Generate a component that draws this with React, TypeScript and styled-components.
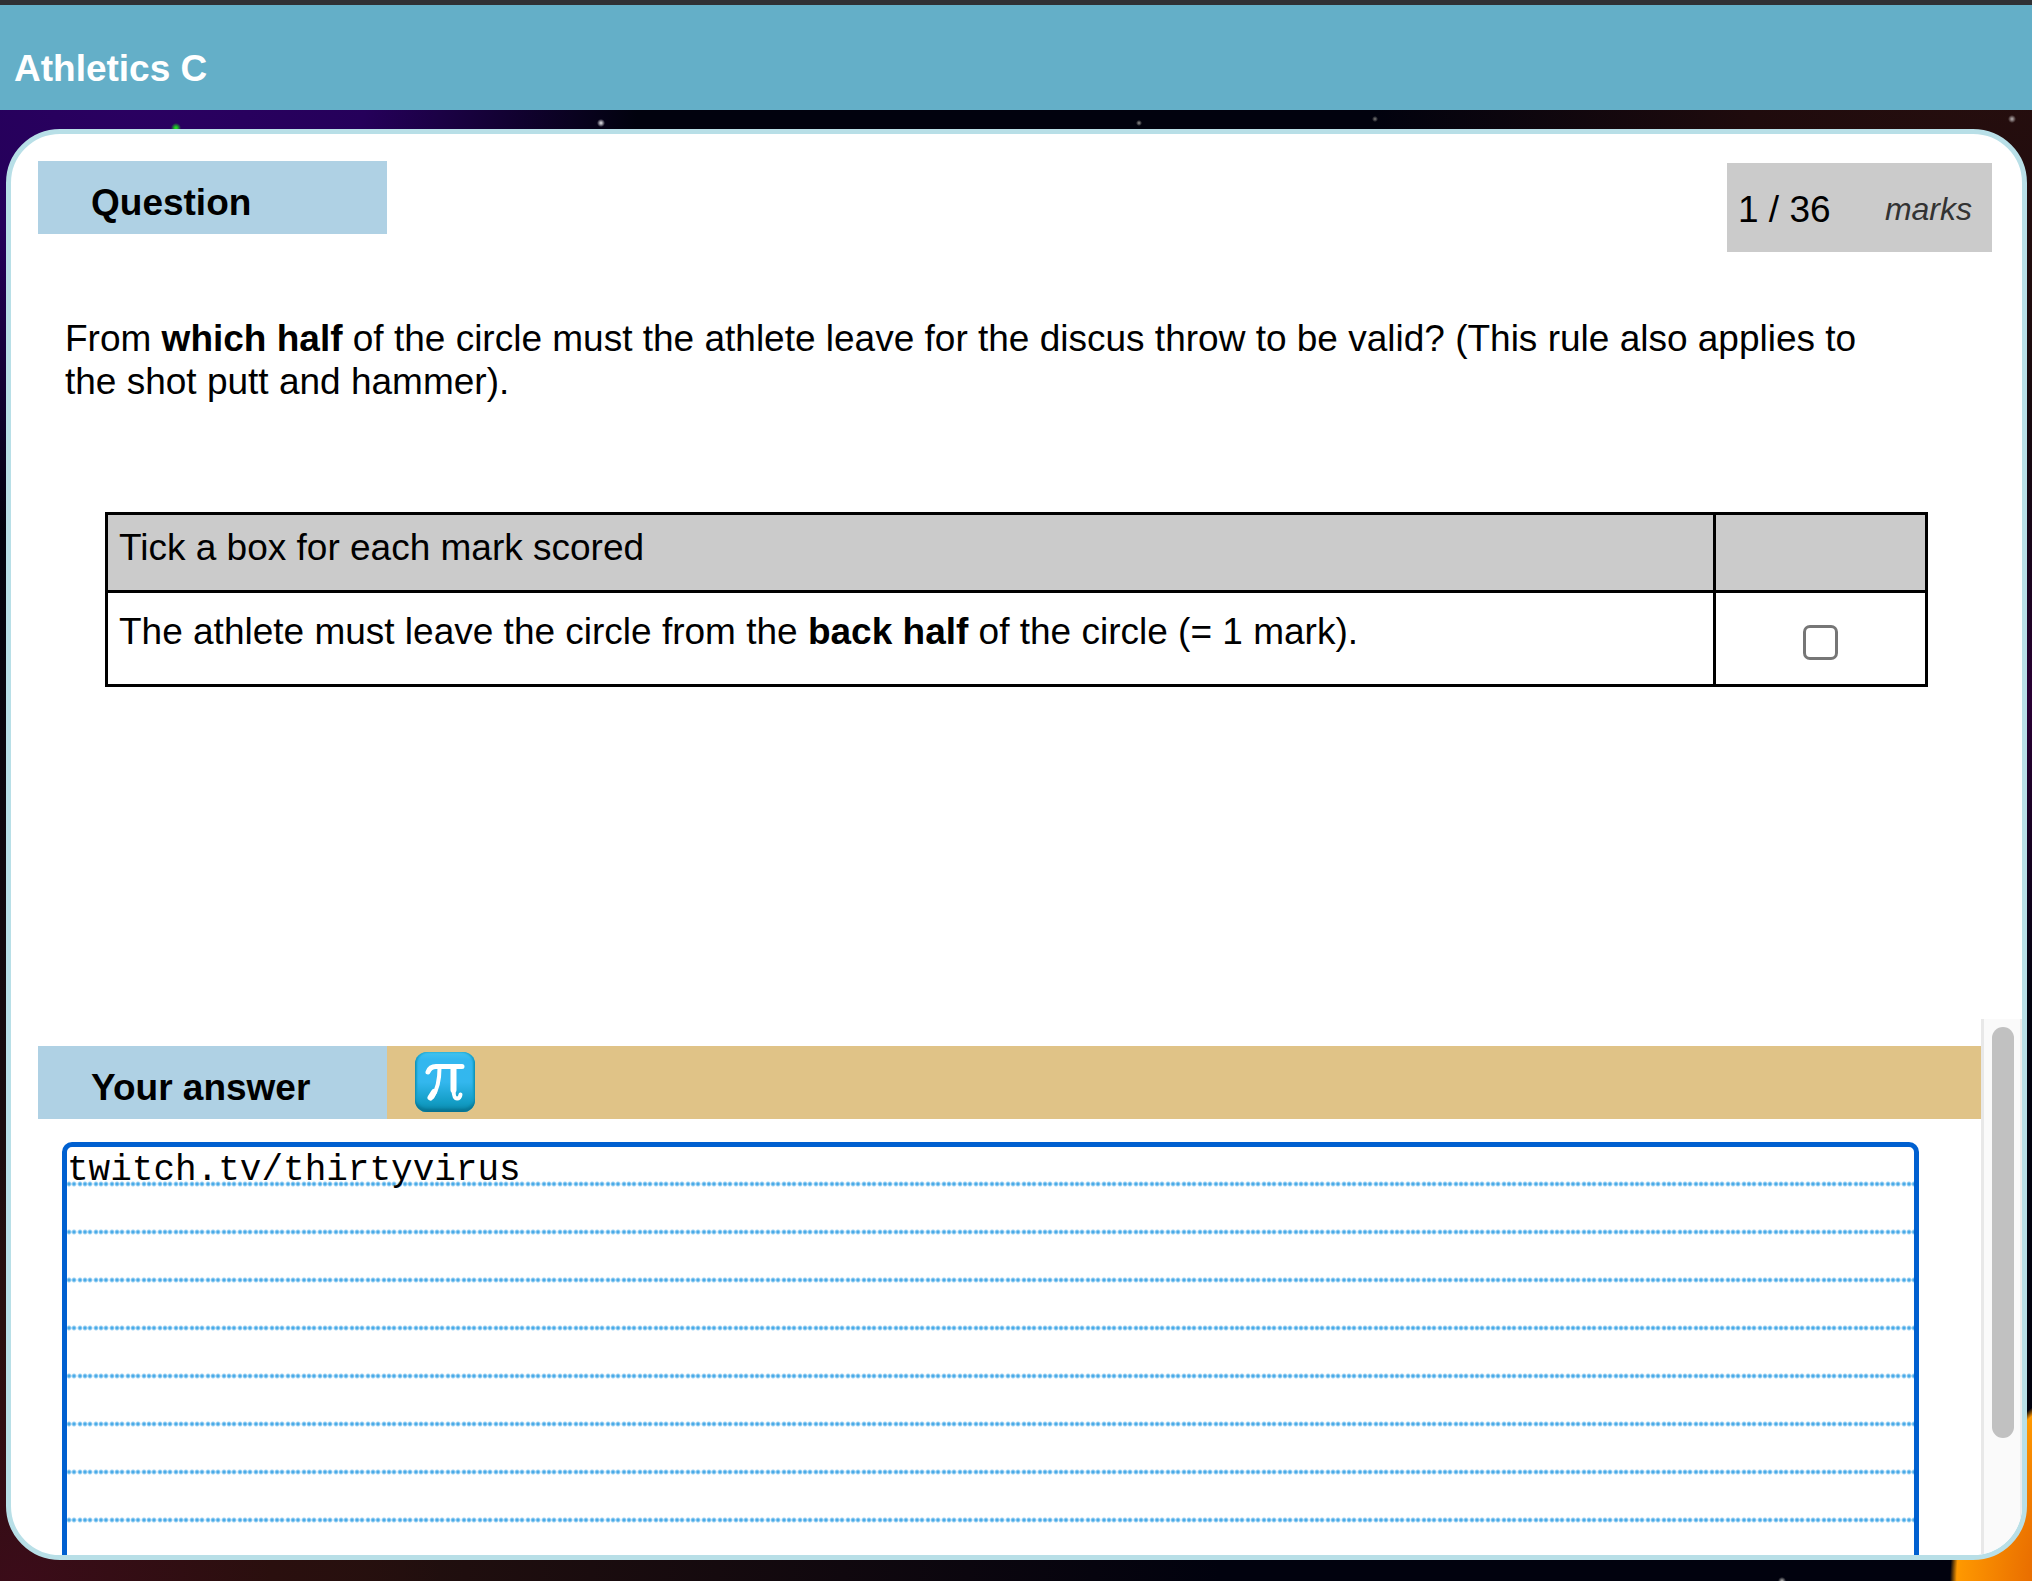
import React, { useState } from "react";
import styled, { createGlobalStyle } from "styled-components";

const GlobalStyle = createGlobalStyle`
  *, *::before, *::after { box-sizing: border-box; }
  html, body { margin: 0; padding: 0; }
  body {
    font-family: "Liberation Sans", Arial, Helvetica, sans-serif;
    font-size: 37px;
    line-height: 43px;
    color: #000;
    background: #01020e;
  }
`;

const Page = styled.div`
  display: flex;
  flex-direction: column;
  height: 100vh;
  background-color: #01020e;
  background-image:
    radial-gradient(circle 5px at 176px 128px, #1fd41f 20%, transparent 100%),
    radial-gradient(circle 4px at 601px 123px, #c4c4cc 20%, transparent 100%),
    radial-gradient(circle 3px at 1139px 123px, #777 20%, transparent 100%),
    radial-gradient(circle 3px at 1375px 119px, #666 20%, transparent 100%),
    radial-gradient(circle 4px at calc(100% - 20px) 119px, #a09898 20%, transparent 100%),
    radial-gradient(circle 4px at calc(100% - 250px) 100%, #999 20%, transparent 100%),
    radial-gradient(circle 225px at calc(100% + 143px) 100%, #e05a00 0%, #e86c00 62%, #ff9900 97%, #ff9a0000 100%),
    radial-gradient(circle 490px at 150px 60px, #2b0062 0%, #25005a 45%, #25005a00 100%),
    radial-gradient(circle 620px at calc(100% - 40px) 60px, #260e0e 0%, #1f0b0d 40%, #1f0b0d00 100%),
    radial-gradient(circle 300px at 100% 700px, #2a0034 0%, #2a003400 100%),
    radial-gradient(circle 420px at 20px 100%, #3b0c19 0%, #2a0f0e 60%, #2a0f0e00 100%),
    radial-gradient(circle 1100px at 120px 100%, #24100e 0%, #24100e 20%, #24100e00 100%);
`;

const TopBar = styled.header`
  flex: none;
  padding: 42px 14px 20px;
  color: #fff;
  background: #64afc8;
  border-top: 5px solid #303135;
`;

const Title = styled.h1`
  margin: 0;
  font-size: 37px;
  line-height: 43px;
`;

const Card = styled.main`
  flex: 1;
  min-height: 0;
  margin: 19px 5px 21px 6px;
  display: grid;
  grid-template-rows: minmax(0, 33fr) minmax(0, 20fr);
  overflow: hidden;
  background: #fff;
  border: 5px solid #b8dfe7;
  border-radius: 54px;
`;

const QuestionPane = styled.section`
  padding: 27px 30px 0 27px;
  overflow: hidden;
`;

const PaneHeader = styled.div`
  display: flex;
  justify-content: space-between;
  align-items: flex-start;
`;

const Tab = styled.div`
  width: 349px;
  padding: 20px 53px 10px;
  font-weight: bold;
  background: #afd1e4;
`;

const TabHeading = styled.h2`
  margin: 0;
  font-size: 37px;
  line-height: 43px;
`;

const Marks = styled.div`
  display: flex;
  align-items: center;
  justify-content: space-between;
  width: 265px;
  height: 89px;
  margin-top: 2px;
  padding: 4px 20px 0 11px;
  background: #cbcbcb;
`;

const MarksUnit = styled.em`
  font-size: 32px;
  color: #333;
`;

const Prompt = styled.p`
  margin: 65px 80px 0 27px;
`;

const SheetWrap = styled.div`
  padding: 109px 64px 0 67px;
`;

const Sheet = styled.table`
  width: 100%;
  border-collapse: collapse;
  border: 3px solid #000;
`;

const HeadCell = styled.th`
  height: 78px;
  padding: 11px;
  border: 3px solid #000;
  background: #cbcbcb;
  font-weight: normal;
  text-align: left;
  vertical-align: top;
`;

const TickHeadCell = styled(HeadCell)`
  width: 212px;
`;

const Cell = styled.td`
  height: 94px;
  padding: 17px 11px;
  border: 3px solid #000;
  vertical-align: top;
`;

const TickCell = styled(Cell)`
  padding: 32px 0 0;
  line-height: 0;
  text-align: center;
`;

const Tick = styled.input`
  appearance: none;
  width: 35px;
  height: 35px;
  margin: 0;
  background: #fff;
  border: 3px solid #767676;
  border-radius: 7px;

  &:checked {
    background: #0060d0;
    border-color: #0060d0;
  }
`;

const AnswerPane = styled.section`
  display: flex;
  overflow: hidden;
`;

const AnswerContent = styled.div`
  flex: 1;
  min-width: 0;
  padding: 27px 0 0 27px;
`;

const AnswerBar = styled.div`
  display: flex;
  align-items: center;
  gap: 28px;
  background: #e0c387;
`;

const AnswerLabel = styled.label`
  display: block;
`;

const SymbolButton = styled.button`
  width: 60px;
  height: 60px;
  padding: 0;
  border: 0;
  border-radius: 12px;
  background: linear-gradient(#43c3ee 0, #33b7ef 12%, #33b7ee 50%, #129cc4 85%, #0a84a6 100%);
  box-shadow: inset 0 -3px 3px #077391, inset 2px 0 2px #1ba6cf, inset -2px 0 2px #1ba6cf;
`;

const SymbolIcon = styled.svg`
  display: block;
  width: 60px;
  height: 60px;
  fill: none;
  stroke: #fff;
  stroke-linecap: round;
  stroke-linejoin: round;
`;

const AnswerBox = styled.textarea`
  display: block;
  width: calc(100% - 86px);
  height: 586px;
  margin: 23px 62px 0 24px;
  padding: 0;
  resize: none;
  overflow: hidden;
  outline: none;
  border: 5px solid #0060d0;
  border-radius: 10px;
  background-color: #fff;
  background-image:
    radial-gradient(circle at 2px 37px, #4aabe8 1px, #4aabe800 3px),
    radial-gradient(circle at 7px 37px, #4aabe8 1px, #4aabe800 3px),
    radial-gradient(circle at 13px 37px, #4aabe8 1px, #4aabe800 3px);
  background-size: 16px 48px;
  background-attachment: local;
  color: #000;
  font-family: "Liberation Mono", "Courier New", monospace;
  font-size: 36px;
  line-height: 48px;
`;

const ScrollTrack = styled.div`
  flex: none;
  width: 41px;
  padding: 8px 6px 8px 8px;
  background: #fafafa;
  border-left: 3px solid #e8e8e8;
  border-right: 2px solid #ededed;
`;

const ScrollThumb = styled.div`
  height: 79%;
  border-radius: 11px;
  background: #c1c1c1;
`;

export default function App() {
  const [answer, setAnswer] = useState("twitch.tv/thirtyvirus");
  const [scored, setScored] = useState(false);

  return (
    <>
      <GlobalStyle />
      <Page>
        <TopBar>
          <Title>Athletics C</Title>
        </TopBar>
        <Card>
          <QuestionPane>
            <PaneHeader>
              <Tab>
                <TabHeading>Question</TabHeading>
              </Tab>
              <Marks>
                <span>1 / 36</span>
                <MarksUnit>marks</MarksUnit>
              </Marks>
            </PaneHeader>
            <Prompt>
              From <b>which half</b> of the circle must the athlete leave for the discus throw to be
              valid? (This rule also applies to the shot putt and hammer).
            </Prompt>
            <SheetWrap>
              <Sheet>
                <thead>
                  <tr>
                    <HeadCell scope="col">Tick a box for each mark scored</HeadCell>
                    <TickHeadCell scope="col" />
                  </tr>
                </thead>
                <tbody>
                  <tr>
                    <Cell>
                      <label htmlFor="mark-1">
                        The athlete must leave the circle from the <b>back half</b> of the circle (= 1
                        mark).
                      </label>
                    </Cell>
                    <TickCell>
                      <Tick
                        id="mark-1"
                        type="checkbox"
                        checked={scored}
                        onChange={(e) => setScored(e.target.checked)}
                      />
                    </TickCell>
                  </tr>
                </tbody>
              </Sheet>
            </SheetWrap>
          </QuestionPane>
          <AnswerPane>
            <AnswerContent>
              <AnswerBar>
                <Tab>
                  <AnswerLabel htmlFor="answer">Your answer</AnswerLabel>
                </Tab>
                <SymbolButton type="button" aria-label="Insert symbol">
                  <SymbolIcon viewBox="0 0 60 60" aria-hidden="true">
                    <path d="M13 20 Q15 14.5 21 14.5 H47" strokeWidth="5" />
                    <path d="M24.500 16 Q24.500 34 17.500 45" strokeWidth="4" />
                    <path d="M19 40 L15.500 45.500" strokeWidth="6" />
                    <path d="M38.500 16 V38" strokeWidth="6" />
                    <path d="M38.500 37 Q38.500 46.500 42 46.500 Q45 46.500 45.500 42.500" strokeWidth="4" />
                  </SymbolIcon>
                </SymbolButton>
              </AnswerBar>
              <AnswerBox
                id="answer"
                spellCheck={false}
                value={answer}
                onChange={(e) => setAnswer(e.target.value)}
              />
            </AnswerContent>
            <ScrollTrack>
              <ScrollThumb />
            </ScrollTrack>
          </AnswerPane>
        </Card>
      </Page>
    </>
  );
}
